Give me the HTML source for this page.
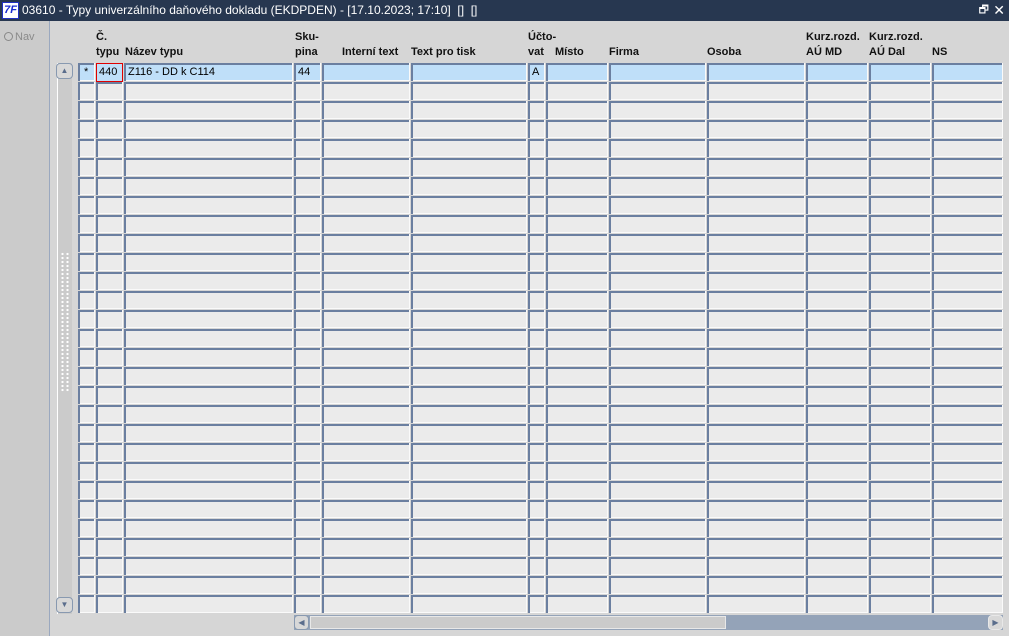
<!DOCTYPE html>
<html><head><meta charset="utf-8"><style>
*{margin:0;padding:0;box-sizing:border-box}
body{width:1009px;height:636px;overflow:hidden;background:#d6d6d6;font-family:"Liberation Sans",Arial,sans-serif;position:relative}
.title{position:absolute;left:0;top:0;width:1009px;height:21px;background:#273750;color:#fff;font-size:12px;line-height:21px}
.logo{position:absolute;left:2px;top:2px;width:17px;height:17px;background:#fff;border:1px solid #2030c0;color:#1a2bd0;font-weight:bold;font-style:italic;font-size:11px;line-height:15px;text-align:center}
.left{position:absolute;left:0;top:21px;width:50px;height:615px;background:#cbcbcb;border-right:1px solid #9aa8bf}
.nav{position:absolute;left:4px;top:31px;font-size:11px;color:#8a8a8a}
.nav i{display:inline-block;width:9px;height:9px;border-radius:50%;background:#ccc;border:1px solid #888;vertical-align:-1px;margin-right:2px}
.h{position:absolute;font-size:11px;font-weight:bold;color:#111;line-height:15px}
.col{position:absolute;top:63px;height:551px;background:
linear-gradient(to bottom,#6b7fa0 18px,transparent 18px) 0 0/2px 19px repeat-y,
linear-gradient(to bottom,#fafafa 18px,transparent 18px) 100% 0/1px 19px repeat-y,
repeating-linear-gradient(to bottom,#6b7fa0 0 2px,#ebebeb 2px 17px,#fafafa 17px 18px,#d6d6d6 18px 19px)}
.sel{position:absolute;top:65px;height:15px;background:#bfdff9;font-size:11px;line-height:15px;padding-left:2px;color:#000}
.vs{position:absolute;left:57px;top:63px;width:15px;height:551px;background:#cbcbcb;border-left:1px solid #fff}
.btn{position:absolute;left:56px;width:17px;height:16px;background:#d8d8d8;border:1px solid #8899b0;border-radius:4px;color:#5a6d8c;font-size:8px;text-align:center;line-height:14px}
.grip{position:absolute;left:60px;top:252px;width:10px;height:140px;background:radial-gradient(circle,#fff 1px,transparent 1.3px) 0 0/5px 4px}
.hs{position:absolute;left:294px;top:615px;width:709px;height:15px;background:#94a3b8}
.thumb{position:absolute;left:16px;top:1px;width:416px;height:13px;background:#cbcbcb;border:1px solid #e8e8e8}
</style></head><body>
<div class="title"><div class="logo">7F</div><span style="position:absolute;left:22px">03610 - Typy univerzálního daňového dokladu (EKDPDEN) - [17.10.2023; 17:10] &nbsp;[] &nbsp;[]</span><span style="position:absolute;right:20px;font-size:11px">🗗</span><span style="position:absolute;right:4px;font-size:14px">✕</span></div>
<div class="left"></div>
<div class="nav"><i></i>Nav</div>

<div class="h" style="left:96px;top:30px">Č.<br>typu</div>
<div class="h" style="left:125px;top:45px">Název typu</div>
<div class="h" style="left:295px;top:30px">Sku-<br>pina</div>
<div class="h" style="left:342px;top:45px">Interní text</div>
<div class="h" style="left:411px;top:45px">Text pro tisk</div>
<div class="h" style="left:528px;top:30px">Účto-<br>vat</div>
<div class="h" style="left:555px;top:45px">Místo</div>
<div class="h" style="left:609px;top:45px">Firma</div>
<div class="h" style="left:707px;top:45px">Osoba</div>
<div class="h" style="left:806px;top:30px">Kurz.rozd.<br>AÚ MD</div>
<div class="h" style="left:869px;top:30px">Kurz.rozd.<br>AÚ Dal</div>
<div class="h" style="left:932px;top:45px">NS</div>

<div class="col" style="left:78px;width:17px"></div>
<div class="col" style="left:96px;width:27px"></div>
<div class="col" style="left:124px;width:169px"></div>
<div class="col" style="left:294px;width:27px"></div>
<div class="col" style="left:322px;width:88px"></div>
<div class="col" style="left:411px;width:116px"></div>
<div class="col" style="left:528px;width:17px"></div>
<div class="col" style="left:546px;width:62px"></div>
<div class="col" style="left:609px;width:97px"></div>
<div class="col" style="left:707px;width:98px"></div>
<div class="col" style="left:806px;width:62px"></div>
<div class="col" style="left:869px;width:62px"></div>
<div class="col" style="left:932px;width:71px"></div>

<div class="sel" style="left:80px;width:14px;padding-left:4px">*</div>
<div class="sel" style="left:96px;width:27px;border:1px solid #e00000;top:63px;height:19px;line-height:17px">440</div>
<div class="sel" style="left:126px;width:166px">Z116 - DD k C114</div>
<div class="sel" style="left:296px;width:24px">44</div>
<div class="sel" style="left:324px;width:85px"></div>
<div class="sel" style="left:413px;width:113px"></div>
<div class="sel" style="left:530px;width:14px">A</div>
<div class="sel" style="left:548px;width:59px"></div>
<div class="sel" style="left:611px;width:94px"></div>
<div class="sel" style="left:709px;width:95px"></div>
<div class="sel" style="left:808px;width:59px"></div>
<div class="sel" style="left:871px;width:59px"></div>
<div class="sel" style="left:934px;width:68px"></div>

<div class="vs"></div>
<div class="grip"></div>
<div class="btn" style="top:63px">▲</div>
<div class="btn" style="top:597px">▼</div>
<div class="hs"><div style="position:absolute;left:0;top:0;width:15px;height:15px;background:#d8d8d8;border:1px solid #8899b0;border-radius:4px;font-size:8px;color:#5a6d8c;line-height:13px;text-align:center">◀</div><div class="thumb"></div><div style="position:absolute;right:0;top:0;width:15px;height:15px;background:#d8d8d8;border:1px solid #e8e8e8;border-radius:4px;font-size:8px;color:#5a6d8c;line-height:13px;text-align:center">▶</div></div>
</body></html>
